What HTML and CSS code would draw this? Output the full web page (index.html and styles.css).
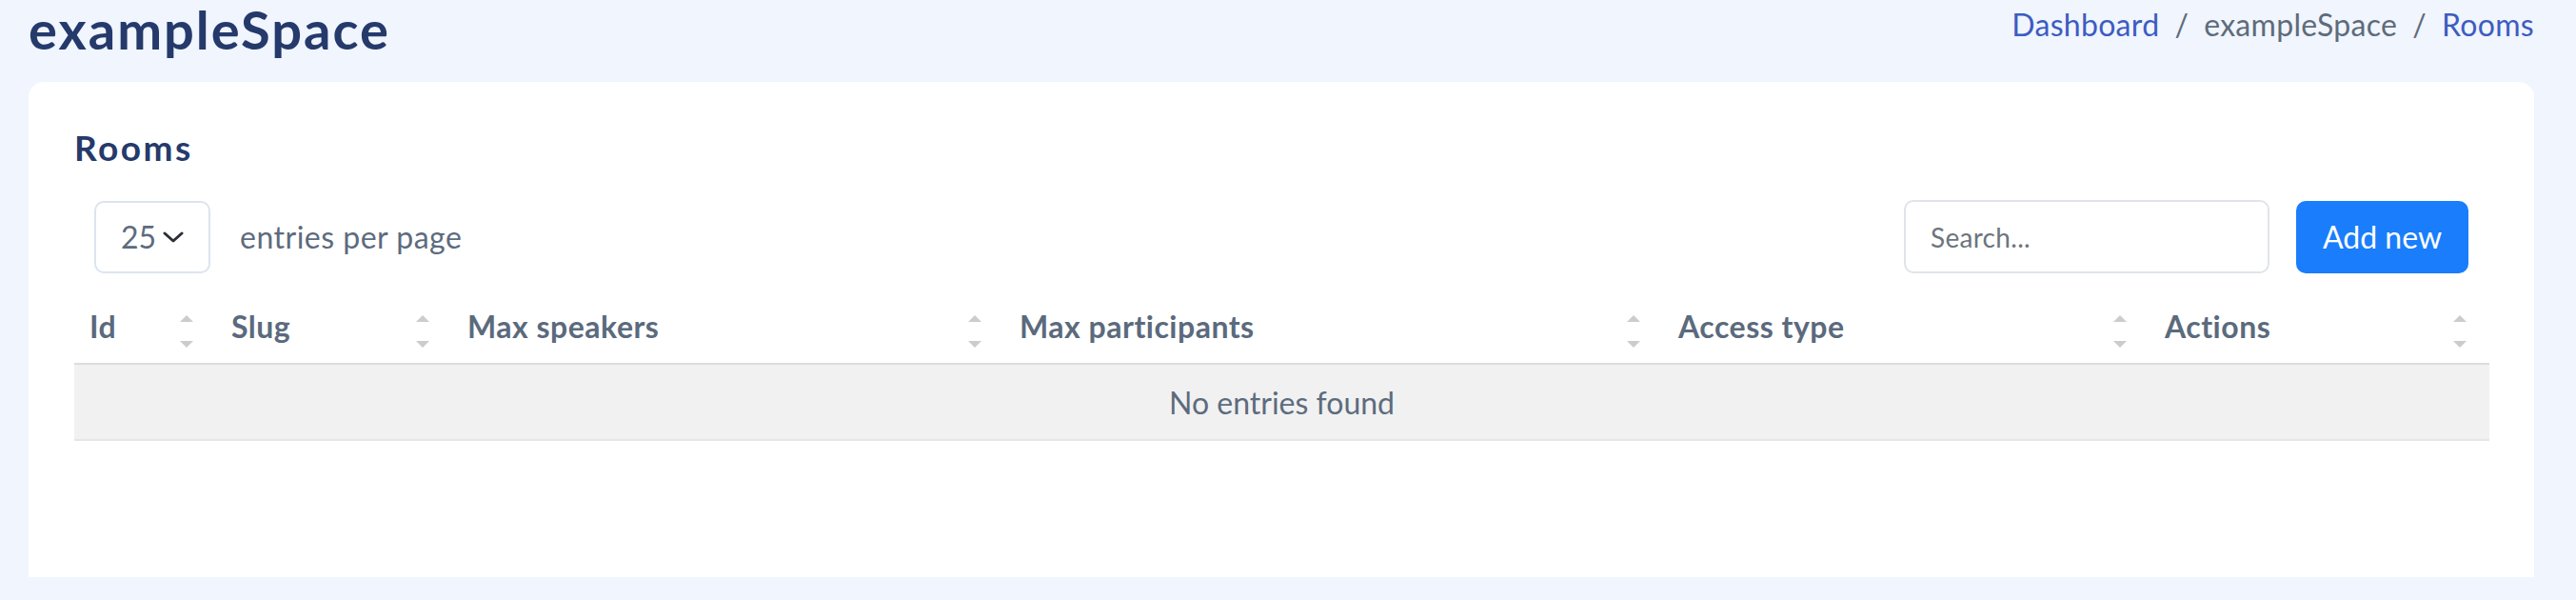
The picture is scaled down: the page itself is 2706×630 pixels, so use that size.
FILE: index.html
```html
<!DOCTYPE html>
<html lang="en">
<head>
  <meta charset="UTF-8" />
  <title>exampleSpace - Rooms</title>
  <meta name="viewport" content="width=device-width, initial-scale=1.0" />
  <link rel="stylesheet" href="styles.css">
</head>
<body>
  <div class="page">
    <header class="page-head">
      <h1 class="space-title">exampleSpace</h1>
      <nav class="crumbs">
        <a href="#">Dashboard</a>
        <span class="sep">/</span>
        <span class="current">exampleSpace</span>
        <span class="sep">/</span>
        <a href="#">Rooms</a>
      </nav>
    </header>

    <section class="card">
      <h2 class="card-title">Rooms</h2>

      <div class="dt-top">
        <div class="dt-dropdown">
          <div class="dt-select">
            <span>25</span>
            <svg width="22" height="14" viewBox="0 0 22 14"><path d="M2 3 L11 11 L20 3" fill="none" stroke="#2b2f36" stroke-width="3" stroke-linecap="round" stroke-linejoin="round"/></svg>
          </div>
          <span class="dt-label">entries per page</span>
        </div>
        <div class="dt-search">
          <input class="dt-input" type="search" placeholder="Search...">
          <a href="#" class="btn-add">Add new</a>
        </div>
      </div>

      <table class="dt-table">
        <colgroup>
          <col class="c-id"><col class="c-slug"><col class="c-speakers">
          <col class="c-participants"><col class="c-access"><col class="c-actions">
        </colgroup>
        <thead>
          <tr>
            <th><div class="sorter">Id<span class="arrows"><i class="up"></i><i class="down"></i></span></div></th>
            <th><div class="sorter">Slug<span class="arrows"><i class="up"></i><i class="down"></i></span></div></th>
            <th><div class="sorter">Max speakers<span class="arrows"><i class="up"></i><i class="down"></i></span></div></th>
            <th><div class="sorter">Max participants<span class="arrows"><i class="up"></i><i class="down"></i></span></div></th>
            <th><div class="sorter">Access type<span class="arrows"><i class="up"></i><i class="down"></i></span></div></th>
            <th><div class="sorter">Actions<span class="arrows"><i class="up"></i><i class="down"></i></span></div></th>
          </tr>
        </thead>
        <tbody>
          <tr><td colspan="6" class="dt-empty">No entries found</td></tr>
        </tbody>
      </table>
    </section>
  </div>
</body>
</html>
```

FILE: styles.css
```css
* {
  box-sizing: border-box;
}

html, body {
  margin: 0;
  padding: 0;
  background: #f0f5fe;
  font-family: 'Lato', sans-serif;
  color: #5d6b7e;
}

.page {
  padding: 0 44px 0 30px;
}

/* top bar: space name + breadcrumb */
.page-head {
  display: flex;
  justify-content: space-between;
  align-items: flex-start;
  height: 86px;
}

.space-title {
  margin: 0;
  padding-top: 3px;
  font-size: 56px;
  font-weight: 700;
  line-height: 1;
  letter-spacing: 2px;
  color: #253a6b;
}

.crumbs {
  display: flex;
  gap: 16px;
  padding-top: 10px;
  font-size: 32px;
  line-height: 1;
  letter-spacing: 0.3px;
}

.crumbs a {
  color: #3d5cc1;
  text-decoration: none;
}

.crumbs .sep,
.crumbs .current {
  color: #5e6b7a;
}

/* card */
.card {
  background: white;
  border-radius: 16px 16px 0 0;
  padding: 50px 48px 0 48px;
  height: 520px;
}

.card-title {
  margin: 0 0 37px 0;
  font-size: 37px;
  font-weight: 700;
  line-height: 1;
  letter-spacing: 2.5px;
  color: #253a6b;
}

.dt-top {
  display: flex;
  justify-content: space-between;
  align-items: center;
  padding: 0 21px;
  margin-bottom: 17px;
}

.dt-dropdown {
  display: flex;
  align-items: center;
  gap: 31px;
}

.dt-select {
  display: flex;
  align-items: center;
  gap: 7px;
  width: 122px;
  height: 76px;
  padding-left: 26px;
  border: 2px solid #dce4ef;
  border-radius: 10px;
  font-size: 32px;
  color: #5d6b7e;
}

.dt-label {
  font-size: 32px;
  letter-spacing: 0.5px;
}

.dt-search {
  display: flex;
  align-items: center;
  gap: 28px;
}

.dt-input {
  width: 384px;
  height: 77px;
  padding: 0 26px;
  border: 2px solid #e0e4ea;
  border-radius: 10px;
  font-family: inherit;
  font-size: 28px;
  letter-spacing: 0.3px;
  color: #5d6b7e;
  outline: none;
}

.dt-input::placeholder {
  color: #6c757d;
}

.btn-add {
  display: flex;
  align-items: center;
  justify-content: center;
  width: 181px;
  height: 76px;
  background: #1a7dfb;
  border-radius: 10px;
  color: white;
  font-size: 32px;
  text-decoration: none;
}

/* table */
.dt-table {
  width: 100%;
  border-collapse: collapse;
  table-layout: fixed;
}

.c-id { width: 149px; }
.c-slug { width: 248px; }
.c-speakers { width: 580px; }
.c-participants { width: 692px; }
.c-access { width: 511px; }
.c-actions { width: 357px; }

.dt-table th {
  height: 78px;
  padding: 0 24px 0 16px;
  border-bottom: 2px solid #dcdcdc;
  text-align: left;
  font-size: 32px;
  font-weight: 700;
  letter-spacing: 0.5px;
  color: #5b6a7d;
}

.sorter {
  display: flex;
  justify-content: space-between;
  align-items: center;
}

.arrows {
  display: flex;
  flex-direction: column;
  gap: 20px;
  margin-top: 10px;
}

.arrows i {
  display: block;
  width: 0;
  height: 0;
  border-left: 7px solid transparent;
  border-right: 7px solid transparent;
}

.arrows .up {
  border-bottom: 7px solid #cccccc;
}

.arrows .down {
  border-top: 7px solid #cccccc;
}

.dt-empty {
  height: 80px;
  background: #f1f1f1;
  border-bottom: 2px solid #e6e6e6;
  text-align: center;
  font-size: 32px;
  color: #5d6b7e;
}
```
